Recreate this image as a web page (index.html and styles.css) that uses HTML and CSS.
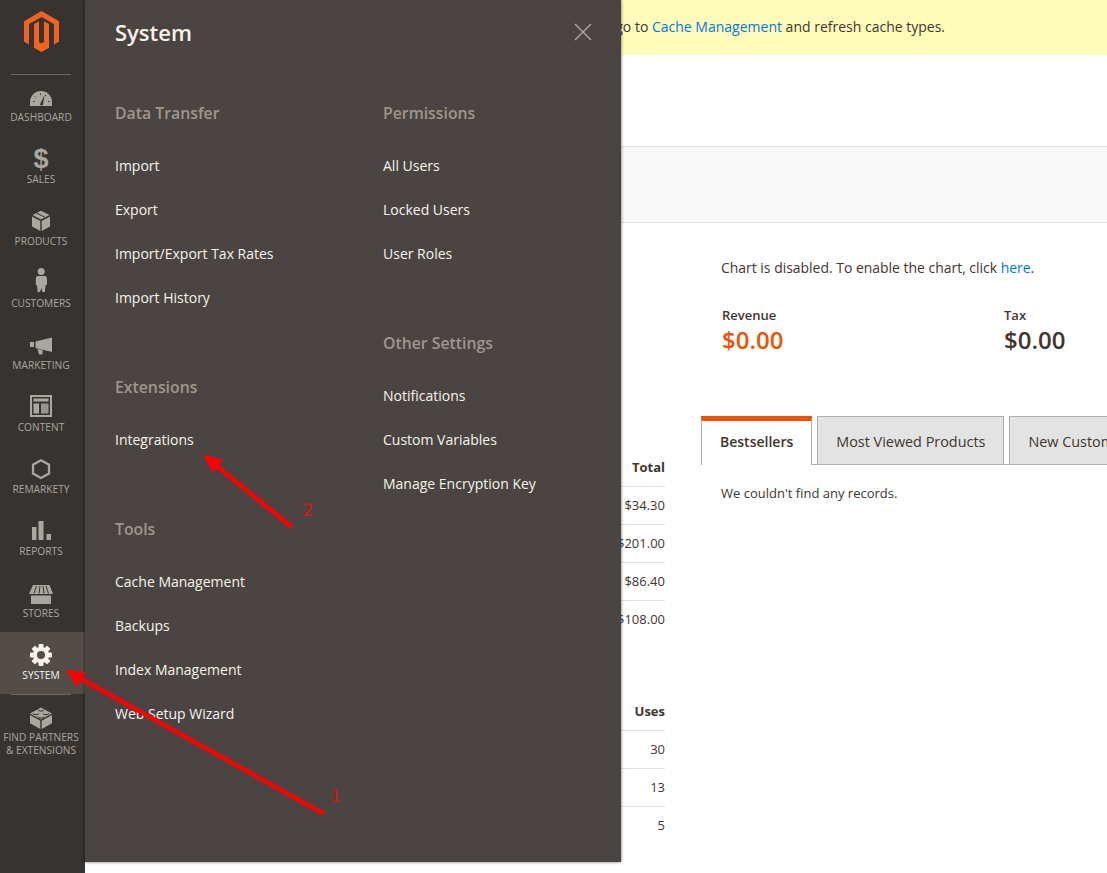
FILE: index.html
```html
<!DOCTYPE html>
<html lang="en">
<head>
<meta charset="utf-8">
<title>System</title>
<link rel="stylesheet" href="styles.css">
</head>
<body>
<div class="app">
  <nav class="sidebar">
    <div class="brand">
      <svg class="logo" viewBox="0 0 35 41" width="35" height="41"><path d="M17.5 0L35 10.2V30.5L30 33.4V13L17.5 5.9 5 13V33.4L0 30.5V10.2Z"/><path d="M20 31L17.5 32.5 15 31V10.2L10 13V36.7L17.5 41 25 36.7V13L20 10.2Z"/></svg>
    </div>
    <ul class="nav">
      <li class="nav-item">
        <svg class="icon" viewBox="0 0 24 26"><path d="M1 22V18A11 11 0 0 1 23 18V22Z"/><path class="cut" d="M11 20.5L15.5 11 14 20.5A1.6 1.6 0 0 1 11 20.5Z"/><path class="cut-line" d="M4 17.5h1.5M6 12.5l1 1M11.5 9.5v1.5M17 11l-.8 1.2M19 17.5h1.5"/></svg>
        <span class="nav-label">Dashboard</span>
      </li>
      <li class="nav-item">
        <span class="icon icon-glyph">$</span>
        <span class="nav-label">Sales</span>
      </li>
      <li class="nav-item">
        <svg class="icon" viewBox="0 0 24 26"><path d="M3 8.5L11.3 13V23L3 18.5Z"/><path d="M12.7 13L21 8.5V18.5L12.7 23Z"/><path d="M3.5 7L12 2.8 20.5 7 12 11.5Z"/><path class="cut-line" d="M7.5 5l8.5 4.3"/></svg>
        <span class="nav-label">Products</span>
      </li>
      <li class="nav-item">
        <svg class="icon" viewBox="0 0 24 26"><circle cx="12.2" cy="1.6" r="3.5"/><path d="M8.5 6H16Q18 6 18 8.5V14.5L16.5 15.5 16 22H13.5L12.3 18 11 22H8.6L8 15.5 6.8 14.5V8.5Q6.8 6 8.5 6Z"/></svg>
        <span class="nav-label">Customers</span>
      </li>
      <li class="nav-item">
        <svg class="icon" viewBox="0 0 24 26"><rect x="1" y="10" width="4" height="5"/><path d="M6.5 9.5L23 5.5V20L6.5 16Z"/><path d="M8.5 17L13.5 18V22.5H10Z"/></svg>
        <span class="nav-label">Marketing</span>
      </li>
      <li class="nav-item">
        <svg class="icon" viewBox="0 0 24 26"><path fill-rule="evenodd" d="M1 1H23V23H1ZM3 3V21H21V3Z"/><rect x="4.5" y="4.5" width="15" height="3"/><rect x="4.5" y="9.5" width="5.5" height="10" /><rect x="12" y="9.5" width="7.5" height="10" class="soft"/></svg>
        <span class="nav-label">Content</span>
      </li>
      <li class="nav-item">
        <svg class="icon" viewBox="0 0 24 26"><path class="hex" d="M12 4.2L20 8.7V17.5L12 22 4 17.5V8.7Z"/></svg>
        <span class="nav-label">Remarkety</span>
      </li>
      <li class="nav-item">
        <svg class="icon" viewBox="0 0 24 26"><rect x="3" y="9" width="4.5" height="13"/><rect x="9.5" y="3" width="5" height="19"/><rect x="17.5" y="16" width="4.5" height="6"/></svg>
        <span class="nav-label">Reports</span>
      </li>
      <li class="nav-item">
        <svg class="icon" viewBox="0 0 24 26"><path d="M4 5H20.5L24 14H0Z"/><path d="M2 15.5H22V24H2Z"/><path class="cut-line" d="M7.5 6L5 13.5M11 6L10 13.5M14 6L15 13.5M17 6L19.5 13.5"/></svg>
        <span class="nav-label">Stores</span>
      </li>
      <li class="nav-item nav-item-active">
        <svg class="icon" viewBox="0 0 24 26">
          <g class="gear"><circle cx="12" cy="13" r="8"/><rect x="9.5" y="2" width="5" height="22" rx="1"/><rect x="9.5" y="2" width="5" height="22" rx="1" transform="rotate(45 12 13)"/><rect x="9.5" y="2" width="5" height="22" rx="1" transform="rotate(90 12 13)"/><rect x="9.5" y="2" width="5" height="22" rx="1" transform="rotate(135 12 13)"/></g>
          <circle class="gear-hole" cx="12" cy="13" r="4"/>
        </svg>
        <span class="nav-label">System</span>
      </li>
      <li class="nav-rule"></li>
      <li class="nav-item">
        <svg class="icon" viewBox="0 0 24 26"><path d="M12 3.5L23 9.5 12 15.5 1 9.5Z"/><path d="M1 11L11.3 16.8V25L1 19.2Z"/><path d="M12.7 16.8L23 11V19.2L12.7 25Z"/><path class="cut-line" d="M9 5.6a3 1.5 0 0 0 6 0M4 9.2a3 1.5 0 0 0 6 0M14 9.2a3 1.5 0 0 0 6 0M9 12.6a3 1.5 0 0 0 6 0"/></svg>
        <span class="nav-label">Find Partners<br>&amp; Extensions</span>
      </li>
    </ul>
  </nav>

  <main class="main">
    <div class="notice">go to <a href="#">Cache Management</a> and refresh cache types.</div>
    <div class="page-head"></div>
    <div class="band"></div>
    <div class="columns">
      <section class="col-left">
        <div class="data-table">
          <div class="data-row data-head">Total</div>
          <div class="data-row">$34.30</div>
          <div class="data-row">$201.00</div>
          <div class="data-row">$86.40</div>
          <div class="data-row">$108.00</div>
        </div>
        <div class="data-table">
          <div class="data-row data-head">Uses</div>
          <div class="data-row">30</div>
          <div class="data-row">13</div>
          <div class="data-row">5</div>
        </div>
      </section>
      <section class="col-right">
        <p class="chart-note">Chart is disabled. To enable the chart, click <a href="#">here</a>.</p>
        <div class="stats">
          <div class="stat stat-revenue">
            <div class="stat-label">Revenue</div>
            <div class="stat-value stat-accent">$0.00</div>
          </div>
          <div class="stat">
            <div class="stat-label">Tax</div>
            <div class="stat-value">$0.00</div>
          </div>
        </div>
        <div class="tabs">
          <div class="tab tab-active">Bestsellers</div>
          <div class="tab">Most Viewed Products</div>
          <div class="tab">New Customers</div>
        </div>
        <p class="empty">We couldn't find any records.</p>
      </section>
    </div>
  </main>

  <aside class="flyout">
    <div class="flyout-head">
      <h2 class="flyout-title">System</h2>
      <svg class="close" viewBox="0 0 18 18" width="18" height="18"><path d="M1 1L17 17M17 1L1 17"/></svg>
    </div>
    <div class="flyout-cols">
      <div class="flyout-col">
        <div class="group">
          <h3>Data Transfer</h3>
          <ul><li>Import</li><li>Export</li><li>Import/Export Tax Rates</li><li>Import History</li></ul>
        </div>
        <div class="group">
          <h3>Extensions</h3>
          <ul><li>Integrations</li></ul>
        </div>
        <div class="group">
          <h3>Tools</h3>
          <ul><li>Cache Management</li><li>Backups</li><li>Index Management</li><li>Web Setup Wizard</li></ul>
        </div>
      </div>
      <div class="flyout-col">
        <div class="group">
          <h3>Permissions</h3>
          <ul><li>All Users</li><li>Locked Users</li><li>User Roles</li></ul>
        </div>
        <div class="group">
          <h3>Other Settings</h3>
          <ul><li>Notifications</li><li>Custom Variables</li><li>Manage Encryption Key</li></ul>
        </div>
      </div>
    </div>
  </aside>

  <svg class="annotations" viewBox="0 0 1107 873" width="1107" height="873">
    <path class="arrow-line" d="M324 814L78 677"/>
    <path class="arrow-head" d="M66 670L86 672 77 687Z"/>
    <text class="arrow-num" x="330" y="802">1</text>
    <path class="arrow-line" d="M292 527L213 463"/>
    <path class="arrow-head" d="M203 454L223 460 213 473Z"/>
    <text class="arrow-num" x="302" y="516">2</text>
  </svg>
</div>
</body>
</html>
```

FILE: styles.css
```css
* { box-sizing: border-box; }
html, body { margin: 0; height: 100%; }
body {
  overflow: hidden;
  background: #fff;
  color: #41362f;
  font-family: "Open Sans", sans-serif;
  font-size: 14px;
}
ul { list-style: none; margin: 0; padding: 0; }
a { color: #007bdb; text-decoration: none; }
p, h2, h3 { margin: 0; }

.app { position: relative; display: flex; width: 1107px; height: 873px; overflow: hidden; }

/* Sidebar */
.sidebar { flex: 0 0 85px; background: #373330; }
.brand {
  height: 75px;
  margin: 0 14px 0 11px;
  padding-top: 11px;
  padding-left: 13px;
  border-bottom: 1px solid #736963;
}
.logo { display: block; fill: #f26322; }
.nav { margin-top: -1px; }
.nav-item {
  display: flex;
  flex-direction: column;
  align-items: center;
  height: 62px;
  padding: 10px 3px 0 0;
  color: #aaa6a0;
}
.nav-item-active { background: #524d49; color: #f7f3eb; }
.nav-rule { height: 1px; margin: 0 14px -1px 11px; background: #736963; position: relative; }
.icon { display: block; flex: 0 0 26px; width: 24px; height: 26px; fill: #aaa6a0; overflow: visible; }
.icon-glyph {
  font-family: "Liberation Sans", sans-serif;
  font-weight: 700;
  font-size: 27px;
  line-height: 26px;
  text-align: center;
  color: #aaa6a0;
}
.nav-label {
  margin-top: 1px;
  font-size: 10.2px;
  line-height: 13px;
  text-align: center;
  text-transform: uppercase;
  white-space: nowrap;
}
.cut { fill: #373330; }
.cut-line { fill: none; stroke: #373330; stroke-width: 1; }
.soft { opacity: 0.85; }
.hex { fill: none; stroke: #aaa6a0; stroke-width: 2.3; }
.gear { fill: #f7f3eb; }
.gear-hole { fill: #524d49; }

/* Main */
.main { flex: 1 1 auto; min-width: 0; overflow: hidden; }
.notice {
  height: 55px;
  padding-right: 162px;
  background: #fffbbb;
  line-height: 54px;
  text-align: right;
  white-space: nowrap;
}
.page-head { height: 91px; }
.band { height: 77px; background: #f8f8f8; border-top: 1px solid #e3e3e3; border-bottom: 1px solid #e3e3e3; }
.columns { display: flex; gap: 36px; }
.col-left { flex: 0 0 580px; padding-top: 226px; }
.col-right { flex: 1 1 auto; min-width: 0; padding-top: 35px; }
.data-table + .data-table { margin-top: 54px; }
.data-row {
  height: 38px;
  border-bottom: 1px solid #e3e3e3;
  font-size: 13px;
  line-height: 37px;
  text-align: right;
}
.data-row:last-child { border-bottom: 0; }
.data-head { font-weight: 700; }

.chart-note { padding-left: 20px; font-size: 13.95px; line-height: 20px; }
.stats { display: flex; margin-top: 28px; padding-left: 21px; }
.stat-revenue { flex: 0 0 282px; }
.stat-label { font-size: 13px; font-weight: 600; line-height: 18px; }
.stat-value { margin-top: -1px; font-size: 24px; font-weight: 600; line-height: 34px; margin-bottom: 1px; }
.stat-accent { color: #eb5202; }

.tabs { display: flex; gap: 5px; height: 49px; margin-top: 58px; border-bottom: 1px solid #adadad; white-space: nowrap; }
.tab {
  flex: none;
  height: 49px;
  padding: 0 18px;
  background: #e3e3e3;
  border: 1px solid #adadad;
  font-size: 14.4px;
  line-height: 50px;
}
.tab-active {
  background: #fff;
  border-top: 5px solid #eb5202;
  border-bottom: 0;
  font-size: 14px;
  font-weight: 600;
  line-height: 42px;
}
.empty { margin-top: 19px; padding-left: 20px; font-size: 13px; line-height: 18px; }

/* Flyout */
.flyout {
  position: absolute;
  left: 85px;
  top: 0;
  width: 536px;
  height: 862px;
  padding-left: 30px;
  background: #4a4542;
  box-shadow: 0 0 3px rgba(0, 0, 0, 0.6);
}
.flyout-head { display: flex; justify-content: space-between; align-items: flex-start; height: 48px; padding: 17px 29px 0 0; }
.flyout-title { color: #f7f3eb; font-size: 22px; font-weight: 600; line-height: 30px; }
.close { display: block; margin-top: 6px; fill: none; stroke: #a8a3a0; stroke-width: 1.5; }
.flyout-cols { display: flex; margin-top: 54px; }
.flyout-col { flex: 0 0 268px; }
.group + .group { margin-top: 56px; }
.group h3 { color: #a79d95; font-size: 15.8px; font-weight: 600; line-height: 22px; opacity: 0.92; }
.group ul { margin-top: 20px; }
.group li { color: #f7f3eb; font-size: 14px; line-height: 44px; }

/* Annotations */
.annotations { position: absolute; left: 0; top: 0; pointer-events: none; }
.arrow-line { fill: none; stroke: #f00; stroke-width: 4.5; }
.arrow-head { fill: #f00; }
.arrow-num { fill: #d8121e; font-family: "DejaVu Sans", sans-serif; font-size: 18px; }
```
